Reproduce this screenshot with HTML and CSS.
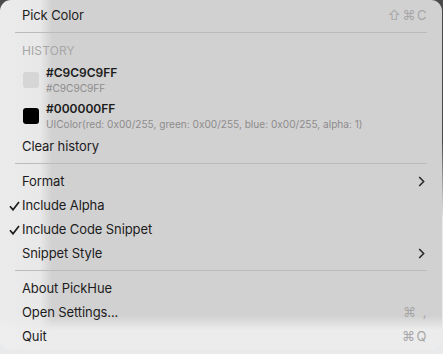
FILE: index.html
```html
<!DOCTYPE html>
<html lang="en">
<head>
    <meta charset="UTF-8">
    <meta name="viewport" content="width=device-width, initial-scale=1.0">
    <title>PickHue Menu</title>
    <link rel="stylesheet" href="styles.css">
</head>
<body>
    <div class="menu">
        <div class="menu-item">
            <span class="label">Pick Color</span>
            <span class="shortcut">⇧⌘C</span>
        </div>
        <div class="separator"></div>

        <div class="section-title">HISTORY</div>
        <div class="history-item">
            <span class="swatch swatch-gray"></span>
            <div class="history-text">
                <span class="history-name">#C9C9C9FF</span>
                <span class="history-code">#C9C9C9FF</span>
            </div>
        </div>
        <div class="history-item">
            <span class="swatch swatch-black"></span>
            <div class="history-text">
                <span class="history-name">#000000FF</span>
                <span class="history-code">UIColor(red: 0x00/255, green: 0x00/255, blue: 0x00/255, alpha: 1)</span>
            </div>
        </div>
        <div class="menu-item">
            <span class="label">Clear history</span>
        </div>
        <div class="separator"></div>

        <div class="menu-item">
            <span class="label">Format</span>
            <svg class="chevron" width="7" height="11" viewBox="0 0 7 11"><path d="M1.2 1 L5.6 5.5 L1.2 10" /></svg>
        </div>
        <div class="menu-item">
            <svg class="check" width="11" height="10" viewBox="0 0 11 10"><path d="M1 5.2 L4 8.8 L10 1" /></svg>
            <span class="label">Include Alpha</span>
        </div>
        <div class="menu-item">
            <svg class="check" width="11" height="10" viewBox="0 0 11 10"><path d="M1 5.2 L4 8.8 L10 1" /></svg>
            <span class="label">Include Code Snippet</span>
        </div>
        <div class="menu-item">
            <span class="label">Snippet Style</span>
            <svg class="chevron" width="7" height="11" viewBox="0 0 7 11"><path d="M1.2 1 L5.6 5.5 L1.2 10" /></svg>
        </div>
        <div class="separator"></div>

        <div class="menu-item">
            <span class="label">About PickHue</span>
        </div>
        <div class="menu-item">
            <span class="label">Open Settings...</span>
            <span class="shortcut">⌘ ,</span>
        </div>
        <div class="menu-item">
            <span class="label">Quit</span>
            <span class="shortcut">⌘Q</span>
        </div>
    </div>
</body>
</html>
```

FILE: styles.css
```css
* {
    margin: 0;
    padding: 0;
    box-sizing: border-box;
}

body {
    font-family: Inter, "DejaVu Sans", sans-serif;
    width: 443px;
    height: 354px;
    overflow: hidden;
    background: linear-gradient(to bottom, #4a4a4a 0, #4a4a4a 140px, #e9eaec 220px);
}

.menu {
    width: 442px;
    height: 350px;
    border-radius: 11px;
    padding: 3px 15px 0 0;
    background:
        linear-gradient(to right, rgba(238, 238, 238, 0.9) 0, rgba(236, 236, 236, 0.85) 40px, rgba(236, 236, 236, 0) 52px),
        linear-gradient(to bottom, rgba(236, 236, 236, 0) 316px, #ececec 330px),
        #d2d1d2;
    color: #1c1c1c;
}

.menu-item {
    position: relative;
    height: 24px;
    display: flex;
    align-items: center;
    padding-left: 22px;
    font-size: 13px;
}

.menu-item .label {
    flex: 1;
    letter-spacing: -0.1px;
}

.shortcut {
    color: #a6a6a6;
    font-size: 13px;
    letter-spacing: 1.5px;
    margin-right: -1px;
}

.chevron {
    fill: none;
    stroke: #2a2a2a;
    stroke-width: 1.6;
    margin-right: 2px;
}

.check {
    position: absolute;
    left: 9px;
    top: 8px;
    fill: none;
    stroke: #1c1c1c;
    stroke-width: 1.7;
}

.separator {
    height: 11px;
    margin-left: 15px;
    display: flex;
    align-items: center;
}

.separator::after {
    content: "";
    display: block;
    width: 100%;
    height: 1px;
    background: #bcbbbc;
}

.section-title {
    height: 24px;
    display: flex;
    align-items: center;
    padding-left: 22px;
    font-size: 12px;
    color: #a7a7a7;
    letter-spacing: 0.1px;
}

.history-item {
    height: 36px;
    display: flex;
    align-items: center;
    padding-left: 23px;
}

.swatch {
    width: 16px;
    height: 16px;
    border-radius: 3px;
    margin-right: 7px;
    flex-shrink: 0;
}

.swatch-gray {
    background: #d6d6d6;
}

.swatch-black {
    background: #000;
}

.history-text {
    display: flex;
    flex-direction: column;
    margin-top: -1px;
}

.history-name {
    font-size: 12px;
    font-weight: 600;
    line-height: 16px;
}

.history-code {
    font-size: 10.1px;
    line-height: 14px;
    color: #8c8c8c;
}
```
